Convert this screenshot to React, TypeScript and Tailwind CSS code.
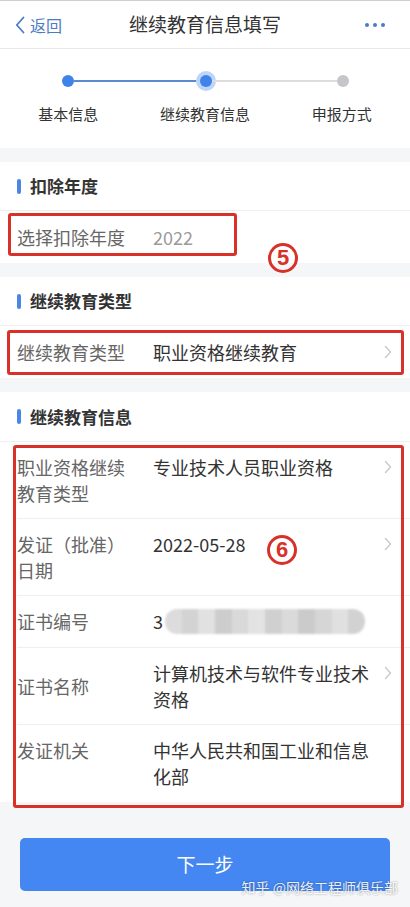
import React from "react";

const FONT = '"Noto Sans CJK SC", "Noto Sans", "Liberation Sans", sans-serif';

const Chevron = ({ className = "" }: { className?: string }) => (
  <svg width="8" height="14" viewBox="0 0 8 14" className={className}>
    <path d="M1.5 1.5 L6.5 7 L1.5 12.5" fill="none" stroke="#c9c9ce" strokeWidth="1.4" strokeLinecap="round" strokeLinejoin="round" />
  </svg>
);

const SectionHeader = ({ title, h = "h-[49px]" }: { title: string; h?: string }) => (
  <div className={`${h} bg-white flex items-center pl-[17px] border-b border-[#efefef]`}>
    <span className="w-[4px] h-[15px] rounded-full bg-[#4a86e8]" />
    <span className="ml-[9px] text-[17px] font-bold text-[#333]">{title}</span>
  </div>
);

// annotation mark, drawn as a red ring with the digit inside
const Mark = ({ n, className }: { n: string; className: string }) => (
  <div
    className={`absolute w-[30px] h-[30px] rounded-full border-[3px] border-[#d8312a] text-[#d8312a] flex items-center justify-center text-[22px] leading-none font-semibold ${className}`}
    style={{ fontFamily: '"Liberation Sans", sans-serif' }}
  >
    {n}
  </div>
);

type Row = { label: string; value: React.ReactNode; arrow?: boolean; tall?: boolean; center?: boolean };

const InfoRow = ({ row, last }: { row: Row; last?: boolean }) => (
  <div className="bg-white pl-[17px]">
    <div
      className={`flex items-start pr-[18px] py-[12px] leading-[26px] text-[18px] ${
        last ? "" : "border-b border-[#efefef]"
      } ${row.tall ? "min-h-[77px]" : "h-[52px]"}`}
    >
      <div className={`w-[136px] shrink-0 ${row.center ? "self-center" : ""}`}>
        <div className="w-[112px] text-[#666]">{row.label}</div>
      </div>
      <div className="w-[222px] text-[#333]">{row.value}</div>
      {row.arrow && (
        <div className="ml-auto h-[26px] flex items-center">
          <Chevron />
        </div>
      )}
    </div>
  </div>
);

const Blurred = () => {
  const tones = ["#dcdcdc", "#d3d3d3", "#e1e1e1", "#cdcdcd", "#d9d9d9", "#e3e3e3", "#d0d0d0", "#dadada", "#cbcbcb", "#d6d6d6", "#e0e0e0", "#d2d2d2"];
  return (
    <div className="flex items-center h-[26px]">
      <span>3</span>
      <span className="ml-[2px] flex w-[200px] h-[25px] rounded-[12px] overflow-hidden blur-[1px]">
        {tones.map((c, i) => (
          <span key={i} className="flex-1 h-full" style={{ background: c }} />
        ))}
      </span>
    </div>
  );
};

export default function App() {
  const infoRows: Row[] = [
    { label: "职业资格继续教育类型", value: "专业技术人员职业资格", arrow: true, tall: true },
    { label: "发证（批准）日期", value: "2022-05-28", arrow: true, tall: true },
    { label: "证书编号", value: <Blurred /> },
    { label: "证书名称", value: "计算机技术与软件专业技术资格", arrow: true, tall: true, center: true },
    { label: "发证机关", value: "中华人民共和国工业和信息化部", tall: true },
  ];

  return (
    <div className="w-[410px] h-[907px] bg-[#f5f6f8] overflow-hidden relative" style={{ fontFamily: FONT }}>
      {/* Header */}
      <div className="h-[49px] bg-white border-t border-[#cfcfcf] border-b border-b-[#e8e8e8] flex items-center px-[15px] relative">
        <div className="flex items-center text-[#4a7cc4]">
          <svg width="10" height="18" viewBox="0 0 10 18">
            <path d="M8.5 1.5 L1.8 9 L8.5 16.5" fill="none" stroke="#4a7cc4" strokeWidth="1.8" strokeLinecap="round" strokeLinejoin="round" />
          </svg>
          <span className="ml-[5px] text-[16px]">返回</span>
        </div>
        <div className="absolute left-0 right-0 text-center text-[19px] text-[#333] pointer-events-none">继续教育信息填写</div>
        <div className="ml-auto flex gap-[4px] mr-[10px]">
          <span className="w-[4px] h-[4px] rounded-full bg-[#4a7cc4]" />
          <span className="w-[4px] h-[4px] rounded-full bg-[#4a7cc4]" />
          <span className="w-[4px] h-[4px] rounded-full bg-[#4a7cc4]" />
        </div>
      </div>

      {/* Stepper */}
      <div className="h-[99px] bg-white pt-[26px]">
        <div className="flex items-center ml-[62px] mr-[61px]">
          <span className="w-3 h-3 rounded-full bg-[#3f83ea]" />
          <span className="flex-1 h-[1.5px] bg-[#5b8ad0]" />
          <span className="w-3 h-3 rounded-full bg-[#3f83ea] ring-4 ring-[#bcd5f8]" />
          <span className="flex-1 h-[1.5px] bg-[#dcdcdc]" />
          <span className="w-3 h-3 rounded-full bg-[#c6c6ca]" />
        </div>
        <div className="grid grid-cols-3 text-center text-[15px] text-[#333] mt-[16px]">
          <span>基本信息</span>
          <span>继续教育信息</span>
          <span>申报方式</span>
        </div>
      </div>

      {/* 扣除年度 */}
      <div className="mt-[14px]">
        <SectionHeader title="扣除年度" />
        <div className="h-[52px] bg-white flex items-center pl-[17px] text-[18px] relative">
          <span className="w-[136px] text-[#666]">选择扣除年度</span>
          <span className="text-[#9a9a9a]">2022</span>
          <div className="absolute left-[8px] top-[2px] w-[229px] h-[43px] border-[3px] border-[#d8312a] rounded-[3px]" />
          <Mark n="5" className="left-[268px] top-[32px]" />
        </div>
      </div>

      {/* 继续教育类型 */}
      <div className="mt-[14px]">
        <SectionHeader title="继续教育类型" />
        <div className="h-[52px] bg-white flex items-center pl-[17px] pr-[18px] text-[18px] relative">
          <span className="w-[136px] text-[#666]">继续教育类型</span>
          <span className="text-[#333]">职业资格继续教育</span>
          <Chevron className="ml-auto" />
          <div className="absolute left-[7px] right-[6px] top-[4px] h-[45px] border-[3px] border-[#d8312a] rounded-[3px]" />
        </div>
      </div>

      {/* 继续教育信息 */}
      <div className="mt-[14px]">
        <SectionHeader title="继续教育信息" h="h-[50px]" />
        <div className="relative">
          {infoRows.map((r, i) => (
            <InfoRow key={i} row={r} last={i === infoRows.length - 1} />
          ))}
          <div className="absolute left-[13px] right-[6px] top-[3px] -bottom-[6px] border-[3px] border-[#d8312a] rounded-[3px]" />
          <Mark n="6" className="left-[267px] top-[93px]" />
        </div>
      </div>

      {/* Button */}
      <div className="px-[20px] mt-[36px]">
        <div className="h-[53px] rounded-[5px] bg-[#4487f2] flex items-center justify-center text-white text-[19px]">下一步</div>
      </div>

      <div
        className="absolute right-[12px] top-[877px] text-[14px] text-white/90"
        style={{ textShadow: "0 0 2px rgba(0,0,0,0.45)" }}
      >
        知乎 @网络工程师俱乐部
      </div>
    </div>
  );
}
